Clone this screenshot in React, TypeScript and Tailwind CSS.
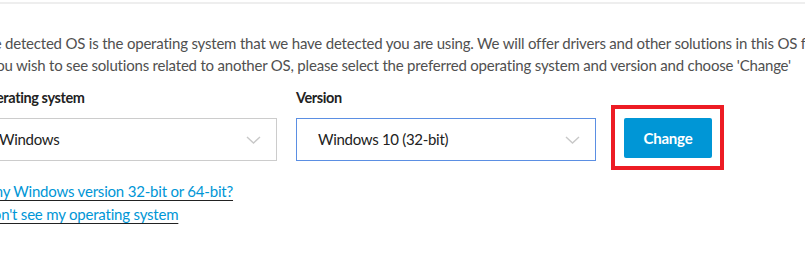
import React from 'react';

const Chevron = () => (
  <svg width="15" height="8" viewBox="0 0 15 8" fill="none" className="shrink-0">
    <path d="M1 1l6.5 6L14 1" stroke="#c8c8c8" strokeWidth="1.4" />
  </svg>
);

const SelectBox = ({ value, active }: { value: string; active?: boolean }) => (
  <div
    className={`flex h-[43px] w-[300px] items-center justify-between border bg-white pl-[21px] pr-[15px] text-[15px] tracking-[-0.3px] text-[#222] ${
      active ? 'border-[#5b8fe3]' : 'border-[#cccccc]'
    }`}
  >
    <span>{value}</span>
    <Chevron />
  </div>
);

const App = () => {
  return (
    <div className="h-[258px] w-[805px] overflow-hidden bg-white font-['Lato','Liberation_Sans',sans-serif]">
      <div className="mt-[2px] h-[2px] w-full bg-[#eeeeee]" />
      <div className="ml-[-23px] pt-[28px]">
        <p className="whitespace-nowrap text-[15px] leading-[22px] tracking-[-0.2px] text-[#505050]">
          The detected OS is the operating system that we have detected you are using. We will offer drivers and other solutions in this OS first.
          <br />
          If you wish to see solutions related to another OS, please select the preferred operating system and version and choose 'Change'
        </p>

        <div className="mt-[12px] flex items-start">
          <div className="flex flex-col">
            <label className="text-[14.5px] font-bold leading-[20px] tracking-[-0.4px] text-[#222]">Operating system</label>
            <div className="mt-[10px]">
              <SelectBox value="Windows" />
            </div>
          </div>
          <div className="ml-[19px] flex flex-col">
            <label className="text-[14.5px] font-bold leading-[20px] tracking-[-0.4px] text-[#222]">Version</label>
            <div className="mt-[10px]">
              <SelectBox value="Windows 10 (32-bit)" active />
            </div>
          </div>
          <div className="relative ml-[28px] mt-[30px]">
            <button className="h-[40px] w-[88px] rounded-[2px] bg-[#0096d6] text-[15px] font-bold tracking-[-0.2px] text-white">
              Change
            </button>
            <div className="pointer-events-none absolute left-[-13px] right-[-12px] top-[-13px] bottom-[-12px] border-4 border-[#ed1c24]" />
          </div>
        </div>

        <div className="mt-[19px] flex flex-col items-start text-[15px] leading-[23px] tracking-[-0.2px]">
          <a href="#" className="text-[#0096d6] underline decoration-[#222] underline-offset-[3px]">
            Is my Windows version 32-bit or 64-bit?
          </a>
          <a href="#" className="text-[#0096d6] underline decoration-[#222] underline-offset-[3px]">
            I don't see my operating system
          </a>
        </div>
      </div>
    </div>
  );
};

export default App;
